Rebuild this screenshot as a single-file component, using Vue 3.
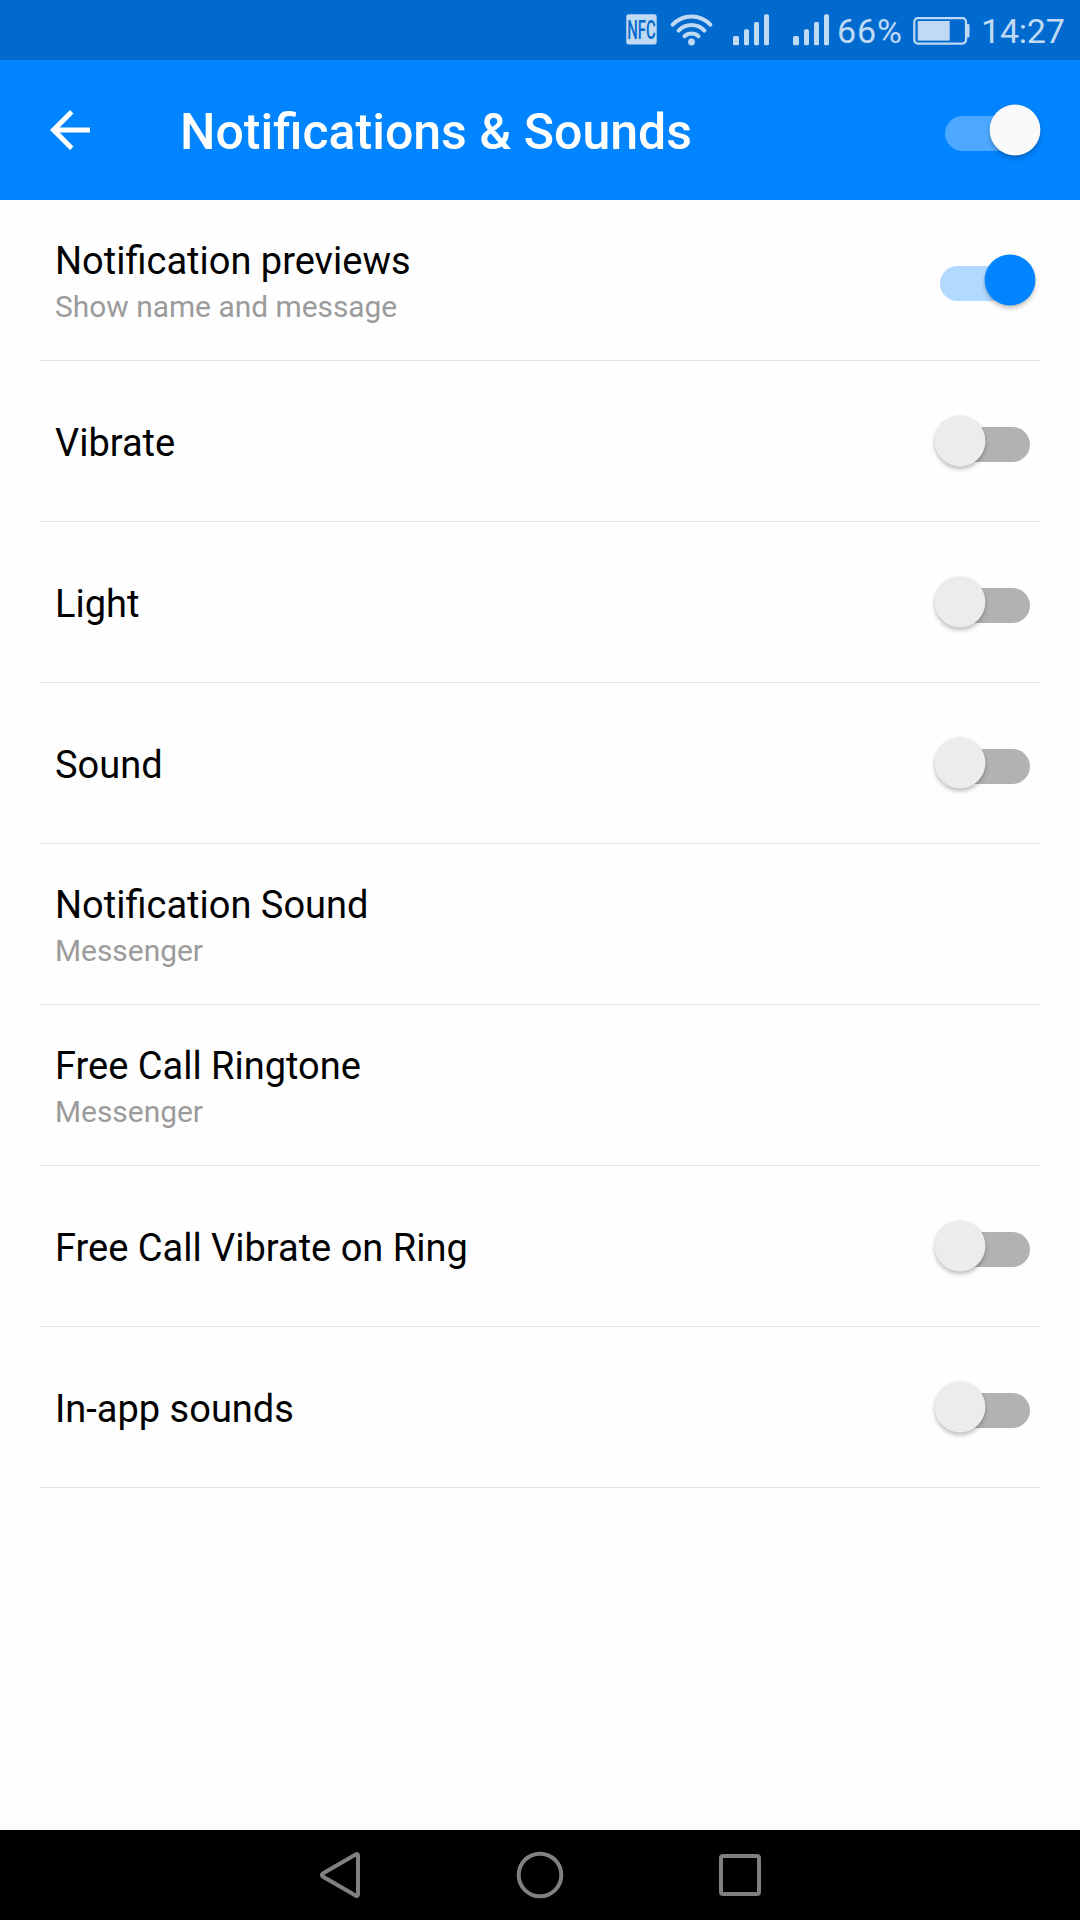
<script setup>
import { ref } from 'vue'

const enabled = ref(true)
const rows = ref([
  { title: 'Notification previews', sub: 'Show name and message', on: true },
  { title: 'Vibrate', on: false },
  { title: 'Light', on: false },
  { title: 'Sound', on: false },
  { title: 'Notification Sound', sub: 'Messenger' },
  { title: 'Free Call Ringtone', sub: 'Messenger' },
  { title: 'Free Call Vibrate on Ring', on: false },
  { title: 'In-app sounds', on: false }
])
</script>

<template>
  <div class="screen">
    <div class="status">
      <svg class="status-icons" width="210" height="60" viewBox="620 0 210 60">
        <rect x="626.3" y="14.3" width="30.4" height="30.2" rx="2.5" fill="#c0daf3" />
        <text x="627.2" y="39" class="nfc" textLength="28.4" lengthAdjust="spacingAndGlyphs">NFC</text>
        <g fill="none" stroke="#c0daf3" stroke-width="4" stroke-linecap="round">
          <path d="M672.7 24.7A25.5 25.5 0 0 1 710.3 24.7" />
          <path d="M678.6 30.6A17.7 17.7 0 0 1 704.4 30.6" />
          <path d="M684.5 36.2A10.4 10.4 0 0 1 698.5 36.2" />
        </g>
        <circle cx="691.5" cy="42" r="3.4" fill="#c0daf3" />
        <g v-for="x in [733, 793]" :key="x" fill="#c0daf3">
          <rect :x="x" y="36" width="6" height="9.3" rx="1.5" />
          <rect :x="x + 11" y="29.3" width="5" height="16" rx="1.5" />
          <rect :x="x + 21" y="22" width="5" height="23.3" rx="1.5" />
          <rect :x="x + 31" y="14.3" width="5" height="31" rx="1.5" />
        </g>
      </svg>
      <span class="percent">66%</span>
      <svg class="battery" width="58" height="60" viewBox="912 0 58 60">
        <rect x="914.3" y="18.2" width="51.7" height="25.4" rx="3.5" fill="none" stroke="#c0daf3" stroke-width="2.2" />
        <rect x="917.7" y="21" width="32" height="19.6" fill="#c0daf3" />
        <path d="M966.5 24h1.6q1.4 0 1.4 1.4v10.7q0 1.4-1.4 1.4h-1.6z" fill="#c0daf3" />
      </svg>
      <span class="time">14:27</span>
    </div>

    <header class="bar">
      <svg class="back" width="40" height="40" viewBox="0 0 40 40">
        <path d="M40 17.5H9.6L23.5 3.5 20 0 0 20 20 40l3.5-3.5L9.6 22.5H40z" fill="#fff" />
      </svg>
      <h1>Notifications &amp; Sounds</h1>
      <button class="toggle header-toggle" :class="{ on: enabled }" @click="enabled = !enabled">
        <svg class="thumb" width="52" height="52" viewBox="0 0 52 52"><circle cx="26" cy="26" r="25.4" /></svg>
      </button>
    </header>

    <main>
      <div v-for="row in rows" :key="row.title" class="row" :class="{ single: !row.sub }">
        <div class="label">
          <div class="title">{{ row.title }}</div>
          <div v-if="row.sub" class="sub">{{ row.sub }}</div>
        </div>
        <button
          v-if="row.on !== undefined"
          class="toggle"
          :class="{ on: row.on }"
          @click="row.on = !row.on"
        >
          <svg class="thumb" width="52" height="52" viewBox="0 0 52 52"><circle cx="26" cy="26" r="25.4" /></svg>
        </button>
      </div>
    </main>

    <nav class="nav">
      <svg width="1080" height="90" viewBox="0 0 1080 90" fill="none" stroke="#808080" stroke-width="4">
        <path d="M322.8 43.4L355.6 24.4Q358 23.2 358 25.8V64.2Q358 66.8 355.6 65.6L322.8 46.6Q321.2 45 322.8 43.4Z" />
        <circle cx="540" cy="45" r="21.3" />
        <rect x="721" y="26" width="38" height="38" rx="2" />
      </svg>
    </nav>
  </div>
</template>

<style>
body {
  margin: 0;
}
</style>

<style scoped>
.screen {
  width: 1080px;
  height: 1920px;
  display: flex;
  flex-direction: column;
  background: #fefefe;
  font-family: Roboto, sans-serif;
  overflow: hidden;
}
.status {
  height: 60px;
  flex: none;
  display: flex;
  background: #006acf;
  color: #c0daf3;
  font-size: 34px;
  line-height: 62px;
  white-space: nowrap;
}
.status svg {
  flex: none;
  display: block;
}
.status-icons {
  margin-left: 620px;
}
.nfc {
  font: 500 25px Roboto, sans-serif;
  fill: #006acf;
}
.percent {
  width: 75px;
  margin-left: 7px;
  letter-spacing: 0.9px;
}
.time {
  margin-left: 11px;
  letter-spacing: -0.2px;
}
.bar {
  height: 140px;
  flex: none;
  display: flex;
  align-items: flex-start;
  background: #0084ff;
}
.back {
  flex: none;
  margin: 50px 0 0 50px;
}
h1 {
  flex: 1;
  margin: 42px 0 0 90px;
  color: #fff;
  font-size: 50px;
  font-weight: 500;
  line-height: 60px;
  white-space: nowrap;
}
.toggle {
  position: relative;
  flex: none;
  width: 90px;
  height: 35px;
  margin: 66px 10px 0 0;
  padding: 0;
  border: 0;
  border-radius: 18px;
  background: #b2b2b2;
}
.toggle.on {
  background: #b2d9ff;
}
.thumb {
  position: absolute;
  left: -6px;
  top: -12px;
  overflow: visible;
  fill: #ececec;
  filter: drop-shadow(0 3px 2px rgba(0, 0, 0, 0.22)) drop-shadow(0 0 1px rgba(0, 0, 0, 0.08));
}
.on .thumb {
  left: 44px;
  fill: #0084ff;
}
.header-toggle {
  margin: 56px 45px 0 0;
}
.header-toggle.on {
  background: #4da9ff;
}
.header-toggle.on .thumb {
  fill: #fafafa;
}
main {
  flex: 1;
}
.row {
  box-sizing: border-box;
  height: 161px;
  margin: 0 40px;
  border-bottom: 1px solid #e1e1e1;
  display: flex;
  align-items: flex-start;
}
.label {
  flex: 1;
  padding: 39px 0 0 15px;
}
.single .label {
  padding-top: 60px;
}
.title {
  color: #000;
  font-size: 38px;
  line-height: 44px;
}
.sub {
  margin-top: 7px;
  color: #9b9b9b;
  font-size: 29.9px;
  line-height: 34px;
}
.nav {
  height: 90px;
  flex: none;
  background: #000;
}
.nav svg {
  display: block;
}
</style>
